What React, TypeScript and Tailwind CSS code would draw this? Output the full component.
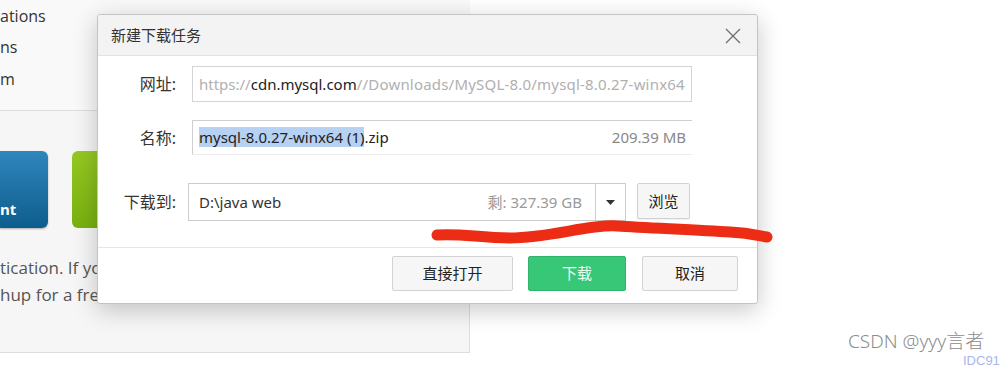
import React from "react";

const CJK = "font-['Noto_Sans','Noto_Sans_CJK_SC',sans-serif]";

function PageBehind() {
  return (
    <div className="flex w-[470px] flex-col font-['Open_Sans',sans-serif]">
      {/* nav list, cut off at the left */}
      <div className="flex h-[110px] flex-col gap-[9px] bg-[#f9f9f9] pt-[5px] text-[16px] leading-[22px] text-[#333]">
        <span>ations</span>
        <span>ns</span>
        <span className="mt-[1px]">m</span>
      </div>

      {/* lower panel */}
      <div className="flex h-[243px] flex-col border-t border-r border-b border-[#dedede] bg-[#f6f6f7]">
        <div className="mt-[40px] flex gap-[24px]">
          <div className="flex h-[77px] w-[48px] items-end rounded-r-[6px] bg-gradient-to-b from-[#2f86bd] to-[#0d5d8d] pb-[8px] text-[15px] font-bold text-white shadow-[0_1px_2px_rgba(0,0,0,0.3)]">
            nt
          </div>
          <div className="h-[77px] w-[100px] rounded-[6px] bg-gradient-to-b from-[#95c922] to-[#78b010]" />
        </div>
        <div className="mt-[28px] flex flex-col gap-[4px] text-[17px] leading-[23px] text-[#555]">
          <span className="whitespace-nowrap">tication. If you do not have an Oracle Web account</span>
          <span className="whitespace-nowrap">hup for a free account.</span>
        </div>
      </div>
    </div>
  );
}

function Label({ children }: { children: React.ReactNode }) {
  return <span className="w-[82px] shrink-0 pr-[4px] text-right text-[16px] text-[#333]">{children}</span>;
}

function Dialog() {
  return (
    <div
      className={`absolute left-[97px] top-[14px] flex h-[290px] w-[661px] flex-col overflow-hidden rounded-[3px] border border-[#c4c4c4] bg-white shadow-[0_6px_24px_rgba(0,0,0,0.22)] ${CJK}`}
    >
      {/* title bar */}
      <div className="flex h-[41px] shrink-0 items-center justify-between border-b border-[#e2e2e2] bg-[#f3f3f3] pl-[13px] pr-[16px]">
        <span className="text-[15px] text-[#333]">新建下载任务</span>
        <svg width="16" height="16" viewBox="0 0 16 16" className="mt-[2px]">
          <path d="M1 1L15 15M15 1L1 15" stroke="#6f6f6f" strokeWidth="1.3" fill="none" />
        </svg>
      </div>

      {/* body */}
      <div className="flex h-[192px] shrink-0 flex-col border-b border-[#e6e6e6] pt-[10px]">
        {/* url */}
        <div className="flex items-center">
          <Label>网址:</Label>
          <div className="ml-[12px] flex h-[36px] w-[500px] items-center overflow-hidden whitespace-nowrap border border-[#d4d4d4] pl-[6px] text-[15px] text-[#b0b0b0]">
            https://<span className="text-[#222]">cdn.mysql.com</span>
            <span className="tracking-[0.2px]">//Downloads/MySQL-8.0/mysql-8.0.27-winx64</span>
          </div>
        </div>

        {/* name */}
        <div className="mt-[18px] flex items-center">
          <Label>名称:</Label>
          <div className="ml-[12px] flex h-[35px] w-[500px] items-center justify-between border-t border-l border-b border-[#cfcfcf] border-b-[#ececec] pl-[6px] pr-[6px] text-[15px]">
            <span className="text-[#222]">
              <span className="bg-[#b6d1f2]">mysql-8.0.27-winx64 (1)</span>.zip
            </span>
            <span className="text-[#888]">209.39 MB</span>
          </div>
        </div>

        {/* save path */}
        <div className="mt-[28px] flex items-start">
          <div className="flex h-[38px] items-center">
            <Label>下载到:</Label>
          </div>
          <div className="ml-[8px] flex h-[38px] w-[438px] border border-[#cccccc] text-[15px]">
            <div className="flex flex-1 items-center justify-between pl-[10px] pr-[13px]">
              <span className="text-[#333]">D:\java web</span>
              <span className="text-[#999]">剩: 327.39 GB</span>
            </div>
            <div className="flex w-[30px] items-center justify-center border-l border-[#cccccc]">
              <svg width="9" height="5" viewBox="0 0 9 5">
                <path d="M0 0H9L4.5 5Z" fill="#333" />
              </svg>
            </div>
          </div>
          <div className="ml-[11px] flex h-[36px] w-[53px] items-center justify-center rounded-[2px] border border-[#d2d2d2] bg-[#f6f6f6] text-[15px] text-[#222] shadow-[0_1px_1px_rgba(0,0,0,0.06)]">
            浏览
          </div>
        </div>
      </div>

      {/* footer */}
      <div className="flex flex-1 items-start justify-end gap-[15px] pr-[19px] pt-[8px] text-[15px]">
        <div className="flex h-[35px] w-[121px] items-center justify-center rounded-[2px] border border-[#d3d3d3] bg-[#f6f6f6] text-[#222]">
          直接打开
        </div>
        <div className="flex h-[35px] w-[98px] items-center justify-center rounded-[2px] border border-[#2fb46b] bg-[#38c677] text-[#eafff2]">
          下载
        </div>
        <div className="ml-[1px] flex h-[35px] w-[96px] items-center justify-center rounded-[2px] border border-[#d3d3d3] bg-[#f6f6f6] text-[#222]">
          取消
        </div>
      </div>
    </div>
  );
}

export default function App() {
  return (
    <div className="relative h-[367px] w-[1004px] overflow-hidden bg-white">
      <PageBehind />
      <Dialog />

      {/* red marker underline */}
      <svg className="pointer-events-none absolute left-0 top-0" width="1004" height="367">
        <path
          d="M437 235 C 460 233, 480 238, 510 238 C 550 238, 590 224, 617 226 C 650 228, 700 230, 730 232 C 750 233, 760 236, 767 237"
          stroke="#ec2c14"
          strokeWidth="11"
          strokeLinecap="round"
          fill="none"
        />
      </svg>

      {/* watermark */}
      <span className={`absolute left-[848px] top-[330px] text-[19px] font-light leading-[22px] text-[#8c8c8c] ${CJK}`}>
        CSDN @yyy言者
      </span>
      <span className="absolute left-[963px] top-[354px] font-['Liberation_Sans',sans-serif] text-[13px] leading-[13px] text-[#a9b6ec]">
        IDC91
      </span>
    </div>
  );
}
